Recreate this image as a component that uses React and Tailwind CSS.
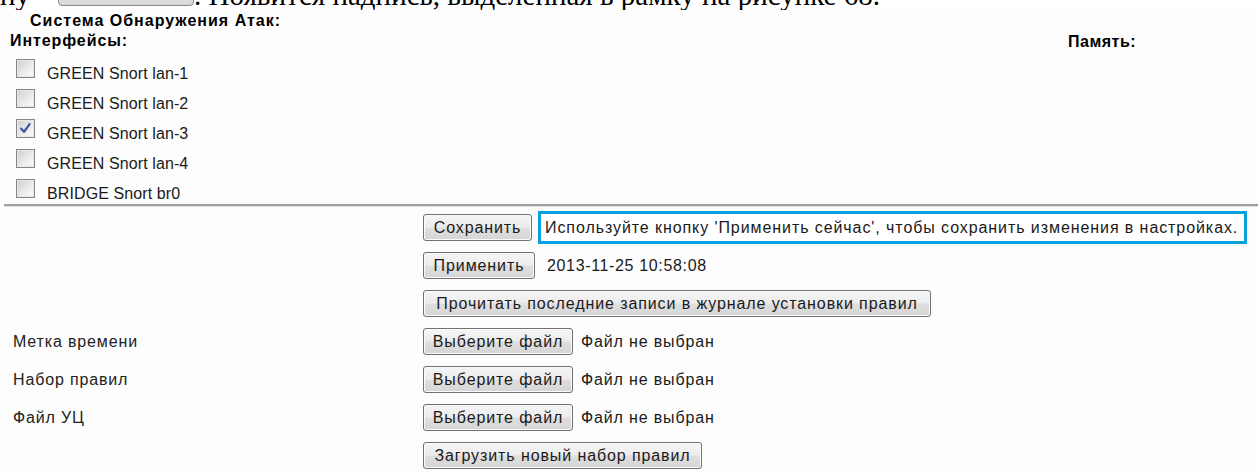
import React from "react";

const ifaces = [
  { name: "GREEN Snort lan-1", on: false },
  { name: "GREEN Snort lan-2", on: false },
  { name: "GREEN Snort lan-3", on: true },
  { name: "GREEN Snort lan-4", on: false },
  { name: "BRIDGE Snort br0", on: false },
];

const btn =
  "inline-flex items-center justify-center h-[27px] rounded-[3px] border border-[#707070] bg-[linear-gradient(#f5f5f5,#ececec_48%,#dfdfdf_52%,#d5d5d5)] shadow-[inset_0_0_0_1px_#fbfbfb] text-[16px] leading-none tracking-[0.9px] text-[#1b1b1b] whitespace-nowrap";

function Checkbox({ on }) {
  return (
    <span className="relative flex w-[19px] h-[19px] shrink-0 border border-[#868686] bg-[linear-gradient(135deg,#cdcdcd,#ebebeb_55%,#fdfdfd)] shadow-[inset_0_0_0_1px_#e8e8e8]">
      {on && (
        <svg viewBox="0 0 17 17" className="absolute inset-0 w-[17px] h-[17px]">
          <path
            d="M4.2 8.6 L7 11.8 L12.6 4.2"
            fill="none"
            stroke="#3e4fa3"
            strokeWidth="2.2"
            strokeLinecap="round"
            strokeLinejoin="round"
          />
        </svg>
      )}
    </span>
  );
}

function FileRow({ label }) {
  return (
    <>
      <p className="pl-[13px] text-[16px] leading-[18px] tracking-[0.85px] text-[#222]">{label}</p>
      <div className="flex items-center">
        <span className={`${btn} w-[150px]`}>Выберите файл</span>
        <span className="ml-[8px] text-[16px] leading-[18px] tracking-[0.85px]">Файл не выбран</span>
      </div>
    </>
  );
}

export default function App() {
  return (
    <div className="w-[1258px] h-[472px] overflow-hidden bg-white font-['Liberation_Sans',Arial,sans-serif] text-[#1a1a1a]">
      {/* caption line of the surrounding document */}
      <div className="h-[10px] overflow-hidden whitespace-nowrap font-['Liberation_Serif','Times_New_Roman',serif] text-[29px] leading-[29px] text-black">
        <p className="-mt-[20px]">
          ну
          <span className="inline-block ml-[28px] w-[136px] h-[26px] align-[-1px] rounded-[4px] border border-[#8a8a8a] bg-[linear-gradient(#f4f4f4,#d8d8d8)]" />
          . Появится надпись, выделенная в рамку на рисунке 68.
        </p>
      </div>

      <div className="h-[462px] bg-[#fdfdfd]">
        <p className="pl-[30px] pt-[2px] text-[16px] leading-[18px] font-bold tracking-[1px] text-black">
          Система Обнаружения Атак:
        </p>
        <div className="mt-[2px] flex text-[16px] leading-[18px] font-bold text-black">
          <p className="pl-[10px] w-[1068px] tracking-[0.9px]">Интерфейсы:</p>
          <p className="pt-[1px] tracking-[0.5px]">Память:</p>
        </div>

        <ul className="mt-[8px] flex flex-col gap-[6px] pl-[16px]">
          {ifaces.map((it) => (
            <li key={it.name} className="flex items-start h-[24px]">
              <Checkbox on={it.on} />
              <span className="ml-[12px] mt-[6px] text-[16px] leading-[18px] tracking-[0.1px]">{it.name}</span>
            </li>
          ))}
        </ul>

        <div className="mt-[1px] ml-[4px] h-[3px] border-t-2 border-[#a0a0a0] bg-[#e0e0e0]" />

        <div className="mt-[7px] grid grid-cols-[423px_1fr] gap-y-[11px] items-center">
          <div />
          <div className="flex items-center">
            <span className={`${btn} w-[109px]`}>Сохранить</span>
            <span className="ml-[6px] -my-[3px] flex items-center w-[709px] h-[33px] border-[3px] border-[#0aa1e2] bg-white pl-[4px] text-[16px] leading-[18px] tracking-[0.92px] whitespace-nowrap">
              Используйте кнопку 'Применить сейчас', чтобы сохранить изменения в настройках.
            </span>
          </div>

          <div />
          <div className="flex items-center">
            <span className={`${btn} w-[112px]`}>Применить</span>
            <span className="ml-[12px] text-[16px] leading-[18px] tracking-[0.65px]">2013-11-25 10:58:08</span>
          </div>

          <div />
          <div className="flex items-center">
            <span className={`${btn} w-[508px]`}>Прочитать последние записи в журнале установки правил</span>
          </div>

          <FileRow label="Метка времени" />
          <FileRow label="Набор правил" />
          <FileRow label="Файл УЦ" />

          <div />
          <div className="flex items-center">
            <span className={`${btn} w-[279px]`}>Загрузить новый набор правил</span>
          </div>
        </div>
      </div>
    </div>
  );
}
